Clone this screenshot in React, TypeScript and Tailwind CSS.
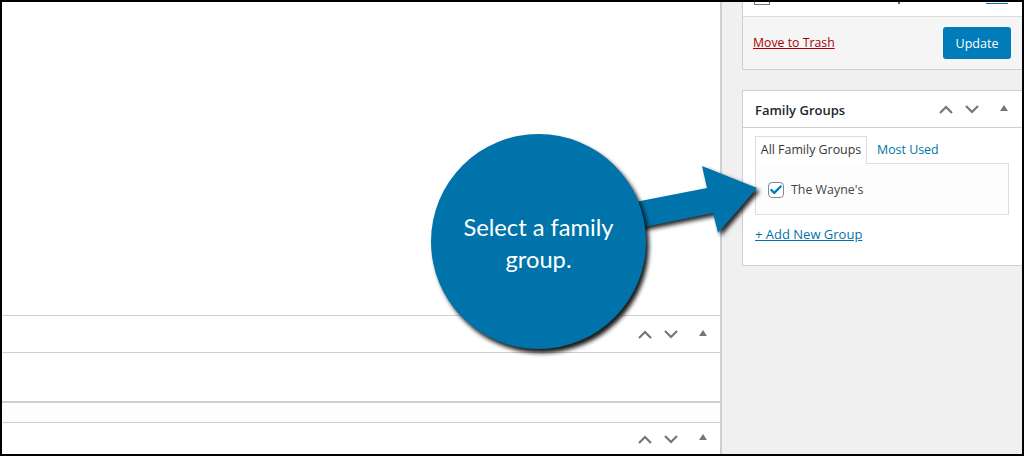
import { Check } from 'lucide-react';

const font = 'font-["Open_Sans","Noto_Sans",sans-serif]';

const Handles = () => (
  <div className="flex items-center">
    <svg width="16" height="10" viewBox="0 0 16 10" fill="none" className="mr-[10px]">
      <path d="M2 9l6-6 6 6" stroke="#72777c" strokeWidth="2.2" />
    </svg>
    <svg width="16" height="10" viewBox="0 0 16 10" fill="none" className="mr-[20px]">
      <path d="M2 2l6 6 6-6" stroke="#72777c" strokeWidth="2.2" />
    </svg>
    <svg width="8" height="6" viewBox="0 0 8 6" className="mr-[13px] -mt-[3px]">
      <path d="M4 0l4 6H0z" fill="#72777c" />
    </svg>
  </div>
);

const MainColumn = () => (
  <div className="w-[720px] h-full bg-white border-r-2 border-[#ccd0d4] flex flex-col pt-[313px]">
    <div className="h-[38px] shrink-0 border-t border-b border-[#ccd0d4] flex items-center justify-end">
      <Handles />
    </div>
    <div className="h-[50px] shrink-0 border-b-2 border-[#ccd0d4]" />
    <div className="h-[19px] shrink-0 bg-[#fdfdfd]" />
    <div className="h-[32px] shrink-0 border-t border-[#ccd0d4] flex items-center justify-end">
      <Handles />
    </div>
  </div>
);

const Sidebar = () => (
  <div className="flex-1 bg-[#f0f0f0] pl-5 flex flex-col gap-[20px]">
    <div className="bg-[#f5f5f5] border-l border-b border-[#ccd0d4] h-[68px] flex flex-col">
      <div className="h-[15px] shrink-0 bg-white border-b border-[#dddddd] flex items-start pl-[11px] pr-[14px]">
        {/* rows cut off by the top of the crop */}
        <div className="w-4 h-[3px] border-x border-b border-[#72777c]" />
        <div className="ml-[128px] w-[2px] h-[2px] bg-[#a0522d]" />
        <div className="ml-auto mt-px w-[22px] h-px bg-[#0073aa]" />
      </div>
      <div className="flex-1 flex items-center justify-between pl-[10px] pr-[11px]">
        <a className="text-[12.3px] text-[#a00] underline">Move to Trash</a>
        <button className="w-[68px] h-[32px] rounded-[3px] bg-[#007cba] text-white text-[12.5px] pt-[3px]">Update</button>
      </div>
    </div>
    <div className="bg-white border border-r-0 border-[#ccd0d4] h-[176px] flex flex-col">
      <div className="h-[37px] shrink-0 border-b border-[#ccd0d4] flex items-center justify-between pl-3 pr-px">
        <span className="text-[13px] font-semibold text-[#23282d] mt-[3px]">Family Groups</span>
        <Handles />
      </div>
      <div className="pl-3 pr-[13px] pt-2">
        <div className="flex h-[28px] items-stretch">
          <div className="w-[112px] border border-b-0 border-[#dddddd] bg-white z-10 h-[28px] flex items-center justify-center text-[12.4px] text-[#32373c]">
            All Family Groups
          </div>
          <div className="flex items-center pl-[10px] text-[12.4px] text-[#0073aa]">Most Used</div>
        </div>
        <div className="h-[52px] -mt-px border border-[#dddddd] bg-[#fdfdfd] flex items-center pl-[12px] pt-[2px]">
          <span className="w-4 h-4 rounded-[4px] border border-[#7e8993] bg-white flex items-center justify-center">
            <Check size={14} strokeWidth={4} color="#007cba" />
          </span>
          <span className="ml-[7px] mt-px text-[12.4px] text-[#444]">The Wayne's</span>
        </div>
        <a className="block mt-[10px] text-[13px] text-[#0073aa] underline">+ Add New Group</a>
      </div>
    </div>
  </div>
);

const Callout = () => (
  <>
    <svg width="140" height="90" viewBox="0 0 140 90" className="absolute left-[628px] top-[158px] drop-shadow-[3px_3px_2px_rgba(0,0,0,0.85)]">
      <path d="M0 43L77 28 72 6 127 28 88 73 83 53 14 67 0 69z" fill="#0073aa" />
    </svg>
    <div className="absolute left-[429px] top-[132px] w-[215px] h-[215px] rounded-full bg-[#0073aa] shadow-[3px_4px_4px_rgba(0,0,0,0.9)] flex items-center justify-center text-center text-white text-[23.7px] leading-[32px] font-['Lato',sans-serif]">
      <span className="mt-[2px]">Select a family<br />group.</span>
    </div>
  </>
);

export default function App() {
  return (
    <div className={`relative w-[1024px] h-[456px] overflow-hidden border-2 border-black flex ${font}`}>
      <MainColumn />
      <Sidebar />
      <Callout />
    </div>
  );
}
